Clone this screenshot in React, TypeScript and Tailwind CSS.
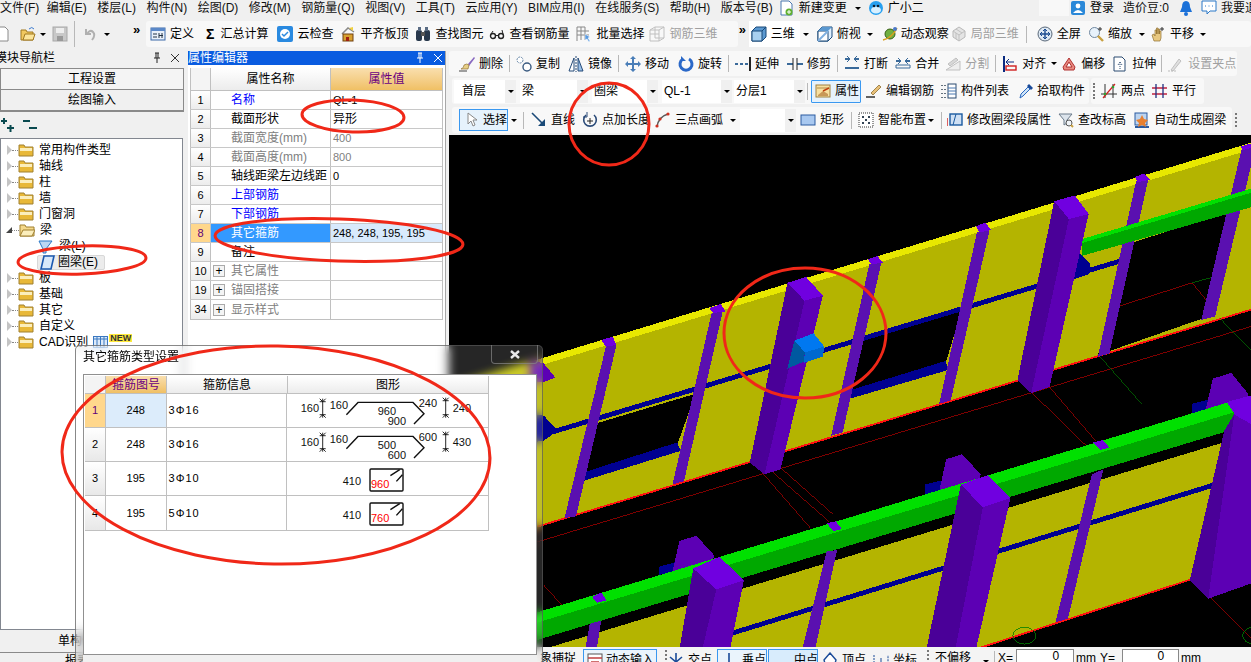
import { ReactNode } from "react";

function Ico({ children }: { children: ReactNode }) {
  return (
    <svg width="16" height="16" viewBox="0 0 16 16" className="shrink-0">
      {children}
    </svg>
  );
}

const icons: Record<string, ReactNode> = {
  page: <><path d="M-6 1h11l3 3v11H-6z" fill="#fff" stroke="#8a8a8a" /></>,
  open: <><path d="M1 4h5l1 2h6v8H1z" fill="#f0c860" stroke="#a07820" /><path d="M3 14l2-6h10l-2 6z" fill="#fbe49a" stroke="#a07820" /><path d="M9 3q3-3 5 0" fill="none" stroke="#3a7ad0" /></>,
  save: <><rect x="1" y="1" width="14" height="14" fill="#c8c8c8" stroke="#a8a8a8" /><rect x="4" y="2" width="8" height="5" fill="#eee" /><rect x="5" y="10" width="6" height="5" fill="#999" /></>,
  undo: <><path d="M4 3v5h5" fill="none" stroke="#b0b0b0" strokeWidth="2" /><path d="M5 8q3-5 6-2t-1 8" fill="none" stroke="#b0b0b0" strokeWidth="2" /></>,
  define: <><rect x="1" y="2" width="14" height="12" fill="#e8f0fa" stroke="#3a68a8" /><rect x="1" y="2" width="14" height="3" fill="#5a88c8" /><path d="M3 8h4M3 11h4M9 7v5M12 7v5M9 9.5h4" stroke="#234" /></>,
  cloud: <><rect x="0" y="0" width="16" height="16" rx="2" fill="#2a8ae0" /><circle cx="8" cy="8" r="5" fill="#fff" /><path d="M5 8l2 2 4-4" fill="none" stroke="#2a8ae0" strokeWidth="1.5" /></>,
  level: <><path d="M2 8l6-6 6 4" fill="none" stroke="#888" strokeWidth="1.5" /><rect x="3" y="8" width="10" height="7" fill="#d8a030" stroke="#704010" /><rect x="6" y="11" width="3" height="4" fill="#a02010" /><path d="M9 2l4-1v4" fill="#f0d040" /></>,
  find: <><rect x="1" y="4" width="6" height="11" rx="2" fill="#28384c" /><rect x="9" y="4" width="6" height="11" rx="2" fill="#28384c" /><rect x="6" y="6" width="4" height="4" fill="#555" /><rect x="3" y="1" width="3" height="4" fill="#5a6c84" /><rect x="10" y="1" width="3" height="4" fill="#5a6c84" /></>,
  glasses: <><circle cx="4" cy="10" r="2.5" fill="none" stroke="#222" strokeWidth="1.4" /><circle cx="12" cy="10" r="2.5" fill="none" stroke="#222" strokeWidth="1.4" /><path d="M6.5 9.5h3M2 8l2-3M14 8l-1-4" stroke="#222" /></>,
  batch: <><path d="M1 1v14M1 1h8M1 5h12M1 9h12M5 1v13M9 1v13" stroke="#888" fill="none" /><path d="M9 8l5 3-2 1 2 3-1 1-2-3-2 1z" fill="#5a9ae0" stroke="#fff" strokeWidth=".5" /></>,
  grid3d: <><path d="M1 4l5-3h9v11l-5 3H1z" fill="none" stroke="#c0c0c0" /><path d="M6 1v11M10 4v11M1 8h9M6 12h9M1 4h9l5-3" stroke="#c0c0c0" fill="none" /></>,
  cube: <><path d="M1 5l4-4h10v10l-4 4H1z" fill="#5a98d0" stroke="#184878" /><path d="M1 5h10v10H1z" fill="#a8d0f0" stroke="#184878" /><path d="M11 5l4-4" stroke="#184878" /></>,
  top: <><path d="M1 5l4-4h10v10l-4 4H1z" fill="#e0f0ff" stroke="#184878" /><path d="M1 5h10v10H1z" fill="#fff" stroke="#184878" /><path d="M1 15l10-10" stroke="#80b0e0" strokeWidth="2" /><path d="M5 1l-4 4h10l4-4z" fill="#5a98d0" /></>,
  orbit: <><circle cx="8" cy="8" r="5" fill="#70b040" stroke="#386018" /><path d="M1 14Q10 12 15 2" fill="none" stroke="#d8a020" strokeWidth="1.5" /><circle cx="13" cy="3" r="2" fill="#4a78c8" /></>,
  local: <><path d="M2 5l6-4 6 4v6l-6 4-6-4z" fill="#e4e4e4" stroke="#b8b8b8" /><path d="M2 5l6 4 6-4M8 9v6M5 3l6 4M5 13V7" stroke="#c0c0c0" fill="none" /></>,
  full: <><circle cx="8" cy="8" r="7" fill="#dce8f4" stroke="#5a6878" /><path d="M8 3v10M3 8h10" stroke="#1a4a90" strokeWidth="1.4" /><path d="M6 5l2-2 2 2M6 11l2 2 2-2M5 6L3 8l2 2M11 6l2 2-2 2" fill="none" stroke="#1a4a90" /></>,
  zoom: <><circle cx="6.5" cy="6.5" r="5" fill="#e8f2fb" stroke="#7088a0" /><path d="M10 10l5 5" stroke="#c8a040" strokeWidth="2.4" /><path d="M12 1v4M10 3h4" stroke="#333" /></>,
  pan: <><path d="M4 15L2 9l2-1 1 2V4h1.5v4V2H8v6V3h1.5v5V5H11v7l-1 3z" fill="#e8c880" stroke="#907030" strokeWidth=".7" /><path d="M12 1v4M10 3h4" stroke="#333" /></>,
  del: <><path d="M9 8l6-7 1 1-6 8z" fill="#8868c0" /><path d="M5 9q3-2 5 0l-1 4H2q3-1 3-4z" fill="#e8d088" stroke="#806020" strokeWidth=".6" /><path d="M0 15h8" stroke="#444" /></>,
  copy: <><circle cx="4" cy="4" r="3" fill="#fff" stroke="#6888a8" strokeDasharray="2 1" /><circle cx="11" cy="11" r="4" fill="#fff" stroke="#3a5a80" strokeWidth="1.4" /></>,
  mirror: <><path d="M1 15L6 2v13z" fill="#fff" stroke="#244a78" /><path d="M15 15L10 2v13z" fill="#9ac0e8" stroke="#244a78" /><path d="M8 0v16" stroke="#244a78" strokeDasharray="2 1" /></>,
  move: <><path d="M8 0l3 3H9v4h4V5l3 3-3 3V9H9v4h2l-3 3-3-3h2V9H3v2L0 8l3-3v2h4V3H5z" fill="#4a7eb8" /></>,
  rotate: <><path d="M11 3a6 6 0 1 1-6 0" fill="none" stroke="#2a68c8" strokeWidth="3" /><path d="M3 0v5h5z" fill="#2a68c8" /></>,
  extend: <><path d="M0 8h3M5 8h3M10 8h3" stroke="#3a6a9a" strokeWidth="2" /><path d="M15 1v14" stroke="#222" strokeWidth="2" /></>,
  trim: <><path d="M0 8h6M10 8h6" stroke="#3a6a9a" strokeWidth="2" /><path d="M6 2v12M10 2v12" stroke="#222" /></>,
  cut: <><path d="M1 3h5M10 3h5M1 12h14" stroke="#3a6a9a" strokeWidth="2" /><path d="M3 6l3-3-3-3M13 6l-3-3 3-3" fill="none" stroke="#3a6a9a" /></>,
  merge: <><path d="M1 5h5M10 5h5" stroke="#3a6a9a" strokeWidth="2" /><path d="M1 12h14v-3H1z" fill="none" stroke="#3a6a9a" /><path d="M3 2l3 3-3 3M13 2l-3 3 3 3" fill="none" stroke="#3a6a9a" /></>,
  split: <><path d="M1 14h14V5z" fill="#eee" stroke="#c0c0c0" /><path d="M3 8l8-6 2 2-8 6z" fill="#d8d8d8" stroke="#c0c0c0" /></>,
  align: <><path d="M2 0v16" stroke="#0a2a80" strokeWidth="2" /><rect x="4" y="10" width="10" height="4" fill="none" stroke="#d02020" strokeWidth="1.4" /><path d="M12 6H5M7 3L4 6l3 3" fill="none" stroke="#0a2a80" /></>,
  offset: <><path d="M8 2l6 9-1 3H3l-1-3z" fill="#e88a80" stroke="#b03030" /><path d="M8 6l3 5H5z" fill="#fff" stroke="#b03030" /></>,
  stretch: <><path d="M2 1h8l3 3v11H2z" fill="#fff" stroke="#2a4a70" /><path d="M8 6v7M6 9l2-3 2 3" fill="none" stroke="#2a4a70" strokeDasharray="1 1" /></>,
  grip: <><path d="M3 14l8-11 2 2-8 10z" fill="#e0e0e0" stroke="#c0c0c0" /><path d="M0 15h8" stroke="#bbb" strokeDasharray="2 1" /></>,
  props: <><rect x="1" y="2" width="14" height="12" fill="#f8e0a0" stroke="#a08040" /><path d="M2 5h12" stroke="#b08c48" /><path d="M3 12l5-4 5 3v2H3z" fill="#c89858" /><path d="M8 8l6-3" stroke="#c04010" strokeWidth="1.4" /></>,
  rebar: <><path d="M5 10l8-8 2 2-8 8z" fill="#e8c078" stroke="#806020" strokeWidth=".7" /><path d="M0 14h9" stroke="#222" strokeWidth="1.4" /></>,
  list: <><path d="M1 2v1M1 6v1M1 10v1M1 14v1M4 2v1M4 6v1M4 10v1M4 14v1" stroke="#345" strokeWidth="1.5" /><rect x="7" y="1" width="8" height="14" fill="#fff" stroke="#2a4a70" /><path d="M7 5h8M7 8h8M7 11h8" stroke="#4a78b0" /></>,
  pick: <><path d="M2 15l1-4 7-7 2 2-7 7z" fill="#cfe4f8" stroke="#2a68c0" /><path d="M9 3l2-2 4 4-2 2z" fill="#1a4a98" /></>,
  twopt: <><path d="M4 1v14M0 11h16M12 1v14" stroke="#333" /><path d="M2 15L14 1" stroke="#d02020" strokeWidth="1.2" /><circle cx="4" cy="11" r="1.3" fill="#30a030" /><circle cx="12" cy="4" r="1.3" fill="#30a030" /></>,
  para: <><path d="M0 5h15M0 11h15" stroke="#c02040" strokeWidth="1.3" /><path d="M4 1v14M11 1v14" stroke="#203080" strokeWidth="1.3" /></>,
  arrow: <><path d="M3 1v11l3-3 2 5 2-1-2-5h4z" fill="#fff" stroke="#888" /></>,
  line: <><path d="M1 1l12 12" stroke="#1a4a78" strokeWidth="1.6" /><path d="M14 7v7H7z" fill="#1a4a78" /></>,
  addlen: <><path d="M4 3a6.3 6.3 0 1 0 8 0" fill="none" stroke="#2a4a78" strokeWidth="1.6" /><path d="M5 0v5H1" fill="none" stroke="#2a4a78" /><path d="M8 6v6M5 9h6" stroke="#222" /></>,
  arc: <><path d="M2 15Q3 5 13 2" fill="none" stroke="#5a5a5a" strokeWidth="1.5" /><circle cx="2" cy="14" r="1.6" fill="#d03020" /><circle cx="5" cy="7" r="1.6" fill="#d03020" /><circle cx="13" cy="2" r="1.6" fill="#d03020" /></>,
  rect: <><rect x="1" y="3" width="14" height="10" fill="#a8c8f0" stroke="#2a5aa0" /></>,
  smart: <><rect x="1" y="1" width="14" height="14" fill="#fff" stroke="#333" strokeDasharray="1 1" /><path d="M4 4h2v2H4zM10 4h2v2h-2zM4 10h2v2H4zM10 10h2v2h-2zM7 7h2v2H7z" fill="#345" /></>,
  modify: <><rect x="3" y="2" width="12" height="11" fill="#cfe0f4" stroke="#1a5aa0" strokeWidth="1.4" /><path d="M0 6v8" stroke="#d02020" strokeWidth="1.4" /><path d="M6 13l3-11" stroke="#1a5aa0" /></>,
  elev: <><path d="M1 2h13l-5 6v3l-3 2V8z" fill="#dce4ec" stroke="#6a7a8a" /><circle cx="11" cy="11" r="3" fill="#f0f4f8" stroke="#555" /><path d="M13 13l2 2" stroke="#c8a040" strokeWidth="2" /></>,
  auto: <><rect x="1" y="1" width="12" height="12" fill="#bcd4f0" stroke="#2a5aa0" /><path d="M1 15h14" stroke="#2a5aa0" strokeWidth="2" /><path d="M8 3l2 4 4 1-3 3 1 4-4-2-4 2 1-4-3-3 4-1z" fill="#e88030" /></>,
  doc: <><path d="M2 1h8l3 3v11H2z" fill="#fff" stroke="#4a78b0" /><circle cx="10" cy="12" r="3.5" fill="#60b030" /><path d="M10 10v4M8 12h4" stroke="#fff" /></>,
  robot: <><circle cx="8" cy="8" r="7" fill="#28a0f0" /><ellipse cx="8" cy="10" rx="5" ry="3.6" fill="#d8f0ff" /><circle cx="6" cy="6" r="1.3" fill="#123" /><circle cx="10" cy="6" r="1.3" fill="#123" /></>,
  login: <><rect x="1" y="1" width="14" height="14" rx="2" fill="#2a88d8" /><circle cx="8" cy="6" r="2.4" fill="#fff" /><path d="M3 13q5-6 10 0z" fill="#fff" /></>,
  bell: <><path d="M8 1q4 0 4 6l2 5H2l2-5q0-6 4-6z" fill="#1a70d8" /><circle cx="8" cy="14" r="2" fill="#1a70d8" /></>,
  chat: <><path d="M1 1h14v10H9l-3 3v-3H1z" fill="#fff" stroke="#2a78c8" /><path d="M4 6h1M7.500 6h1M11 6h1" stroke="#2a78c8" /></>,
  cross: <><path d="M8 1v14M2 5l6 5 6-5" fill="none" stroke="#1a4a98" strokeWidth="1.6" /></>,
  perp: <><path d="M8 1v12M1 13h14" stroke="#1a4a98" strokeWidth="1.6" /></>,
  mid: <><path d="M1 13h14" stroke="#1a4a98" strokeWidth="1.6" /><rect x="6" y="11" width="4" height="4" fill="#1a4a98" /></>,
  vertex: <><path d="M8 1l6 7-2 7H4L2 8z" fill="#fff" stroke="#1a4a98" strokeWidth="1.4" /></>,
  coord: <><path d="M1 3v9l7 3 7-3V3" fill="none" stroke="#1a4a98" strokeDasharray="2 1" /><path d="M8 15V6" stroke="#1a4a98" /></>,
  input: <><rect x="1" y="2" width="14" height="13" fill="#fff" stroke="#555" /><path d="M1 6h14M4 10h8" stroke="#c04040" strokeWidth="1.4" /></>,
};

function Caret({ className = "" }: { className?: string }) {
  return <span className={`inline-block shrink-0 border-x-[3px] border-t-[3px] border-x-transparent border-t-black ${className}`} />;
}

function Sep({ className = "" }: { className?: string }) {
  return <span className={`inline-block shrink-0 w-px h-[17px] bg-[#b8b8b8] ${className}`} />;
}

function Grip() {
  return <span className="shrink-0 w-[2px] h-[16px] border-l-2 border-dotted border-[#777]" />;
}

function Tool({ icon, label, grey = false, className = "" }: { icon: string; label: string; grey?: boolean; className?: string }) {
  return (
    <div className={`flex items-center gap-1 shrink-0 ${grey ? "text-[#a0a0a0]" : "text-black"} ${className}`}>
      <Ico>{icons[icon]}</Ico>
      <span>{label}</span>
    </div>
  );
}

function Select({ label, className = "" }: { label: string; className?: string }) {
  return (
    <div className={`flex items-center justify-between h-[23px] bg-white pl-[2px] shrink-0 ${className}`}>
      <span>{label}</span>
      <span className="flex items-center justify-center w-[11px] h-full bg-[#f0f0f0]">
        <Caret />
      </span>
    </div>
  );
}

function TopMenu() {
  const items = ["编辑(E)", "楼层(L)", "构件(N)", "绘图(D)", "修改(M)", "钢筋量(Q)", "视图(V)", "工具(T)", "云应用(Y)", "BIM应用(I)", "在线服务(S)", "帮助(H)", "版本号(B)"];
  return (
    <div className="flex items-center h-[16px] bg-[#f0f0f0] text-[#111]">
      <span className="shrink-0 -mr-[3px]">文件(F)</span>
      <div className="flex items-center gap-[10.5px] ml-[10.5px] shrink-0">
        {items.map((m) => (
          <span key={m} className="shrink-0">{m}</span>
        ))}
      </div>
      <Tool icon="doc" label="新建变更" className="ml-[6px]" />
      <Caret className="ml-[8px]" />
      <Tool icon="robot" label="广小二" className="ml-[7px]" />
      <div className="ml-[115px] w-[30px] h-full bg-[#f8f8f8] shrink-0" />
      <Tool icon="login" label="登录" className="ml-[1px]" />
      <span className="ml-[9px] shrink-0">造价豆:0</span>
      <span className="ml-[9px]"><Ico>{icons.bell}</Ico></span>
      <span className="ml-[7px]"><Ico>{icons.chat}</Ico></span>
      <span className="ml-[4px] shrink-0">我要退出</span>
    </div>
  );
}

function MainToolbar() {
  return (
    <div className="flex items-center h-[35px] pt-[1px]">
      <div className="flex items-center h-[26px] w-[128px] shrink-0 overflow-hidden">
        <Ico>{icons.page}</Ico>
        <span className="ml-[4px]"><Ico>{icons.open}</Ico></span>
        <Caret className="ml-[4px]" />
        <span className="ml-[6px]"><Ico>{icons.save}</Ico></span>
        <Sep className="ml-[6px] h-[26px]" />
        <span className="ml-[7px]"><Ico>{icons.undo}</Ico></span>
        <Caret className="ml-[6px] border-t-[#aaa]" />
      </div>
      <span className="ml-[5px] w-[13px] text-[13px] font-bold leading-none -mt-[10px]">»</span>
      <div className="flex items-center gap-[7px] h-[26px] w-[594px] pl-[4px] bg-[#f8f8f8] rounded-[3px]">
        <Tool icon="define" label="定义" />
        <span className="flex items-center gap-[6px] ml-[5px] mr-[2px] shrink-0">
          <span className="font-bold text-[14px] leading-none">Σ</span>
          <span>汇总计算</span>
        </span>
        <Tool icon="cloud" label="云检查" />
        <Tool icon="level" label="平齐板顶" />
        <Tool icon="find" label="查找图元" />
        <Tool icon="glasses" label="查看钢筋量" className="-ml-[1px]" />
        <Tool icon="batch" label="批量选择" />
        <Tool icon="grid3d" label="钢筋三维" grey className="-ml-[2px]" />
      </div>
      <span className="ml-[1px] w-[10px] text-[13px] font-bold leading-none -mt-[10px]">»</span>
      <div className="flex items-center h-[26px] w-[504px] bg-[#f8f8f8] rounded-[3px]">
        <div className="flex items-center h-full pl-[2px] w-[51px] bg-white"><Tool icon="cube" label="三维" /></div>
        <Caret className="ml-[3px]" />
        <Tool icon="top" label="俯视" className="ml-[8px]" />
        <Caret className="ml-[6px]" />
        <Tool icon="orbit" label="动态观察" className="ml-[9px] [&>span]:-ml-[1px]" />
        <Tool icon="local" label="局部三维" grey className="ml-[2px]" />
        <Sep className="ml-[7px]" />
        <Tool icon="full" label="全屏" className="ml-[10px]" />
        <Tool icon="zoom" label="缩放" className="ml-[7px]" />
        <Caret className="ml-[7px]" />
        <Tool icon="pan" label="平移" className="ml-[5px]" />
        <Caret className="ml-[6px]" />
      </div>
    </div>
  );
}

function NavPanel() {
  const before = ["常用构件类型", "轴线", "柱", "墙", "门窗洞"];
  const after = ["板", "基础", "其它", "自定义", "CAD识别"];
  const Folder = ({ open = false }: { open?: boolean }) => (
    <svg width="16" height="14" viewBox="0 0 16 14" className="shrink-0">
      <path d="M1 2h5l1 2h8v9H1z" fill={open ? "#f4d88a" : "#e8b838"} stroke="#a08030" />
      {open ? <path d="M1 13l3-6h12l-3 6z" fill="#fbeebc" stroke="#a08030" /> : <path d="M2 5h12v3H2z" fill="#fbeebc" />}
    </svg>
  );
  const Branch = ({ label }: { label: string }) => (
    <div className="flex items-center h-4">
      <span className="ml-[6px] w-0 h-0 border-y-[5px] border-l-[5px] border-l-[#c4c4c4] border-y-transparent" />
      <span className="w-[6px] border-t border-dotted border-[#888]" />
      <Folder />
      <span className="ml-[5px]">{label}</span>
      {label === "CAD识别" && (
        <>
          <svg width="15" height="12" viewBox="0 0 15 12" className="ml-[5px]">
            <rect x=".5" y=".5" width="14" height="11" fill="#dceafa" stroke="#3a78c0" />
            <path d="M4 1v10M7.500 1v10M11 1v10M1 3h13" stroke="#3a78c0" />
          </svg>
          <span className="-mt-[8px] ml-[1px] px-[1px] h-[8px] leading-[8px] text-[9px] font-bold bg-[#ffe93c] text-[#333]">NEW</span>
        </>
      )}
    </div>
  );
  return (
    <div className="flex flex-col w-[186px] shrink-0 h-full overflow-hidden [&>*]:shrink-0">
      <div className="flex items-center h-[14px]">
        <span className="-ml-[5px]">模块导航栏</span>
        <svg width="10" height="12" viewBox="0 0 10 12" className="ml-[97px]"><path d="M3 1h4M4 1v5M6 1v5M2 6h6M5 6v5" stroke="#222" fill="none" /></svg>
        <svg width="10" height="10" viewBox="0 0 10 10" className="ml-[8px]"><path d="M1 1l8 8M9 1l-8 8" stroke="#333" /></svg>
      </div>
      <div className="mt-[3px] w-[184px] h-[22px] flex items-center justify-center border border-[#8a8a8a] bg-[#f4f4f4]">工程设置</div>
      <div className="w-[184px] h-[22px] flex items-center justify-center border-x border-b-2 border-[#8a8a8a] bg-[#f0f0f0]">绘图输入</div>
      <div className="flex items-center h-[26px] pl-[1px]">
        <svg width="42" height="16" viewBox="0 0 42 16">
          <path d="M0 4h6M3 1v6M6 11h7M9.500 8v7M22 4h7M28 11h8" stroke="#0a4a50" strokeWidth="2" />
        </svg>
      </div>
      <div className="w-[183px] h-[492px] border border-[#828790] bg-white pt-[3px] overflow-hidden">
        {before.map((b) => <Branch key={b} label={b} />)}
        <div className="flex items-center h-4">
          <span className="ml-[5px] w-0 h-0 border-b-[6px] border-l-[6px] border-b-[#444] border-l-transparent" />
          <span className="w-[7px] border-t border-dotted border-[#888]" />
          <Folder open />
          <span className="ml-[5px]">梁</span>
        </div>
        <div className="flex items-center h-4 pl-[37px]">
          <svg width="15" height="15" viewBox="0 0 15 15"><path d="M1 2h13l-6 8v4H5v-4z" fill="#bcd8f4" stroke="#2a78c8" /></svg>
          <span className="ml-[6px]">梁(L)</span>
        </div>
        <div className="flex items-center h-4 pl-[36px]">
          <div className="flex items-center h-[15px] w-[68px] pl-[2px] rounded-[2px] bg-[#ececec] border border-[#d8d8d8]">
            <svg width="15" height="15" viewBox="0 0 15 15"><path d="M4 1h10l-3 13H1z" fill="#d8e8fa" stroke="#1a58b0" strokeWidth="1.6" /></svg>
            <span className="ml-[3px]">圈梁(E)</span>
          </div>
        </div>
        {after.map((b) => <Branch key={b} label={b} />)}
      </div>
      <div className="w-[184px] h-[23px] flex items-center pl-[58px] border-b border-[#8a8a8a] bg-[#f0f0f0]">单构件输入</div>
      <div className="pl-[65px] pt-[2px]">报表预览</div>
    </div>
  );
}

function PropsPanel() {
  const rows: { n: string; name: string; value?: string; tone?: string; plus?: boolean; sel?: boolean }[] = [
    { n: "1", name: "名称", value: "QL-1", tone: "text-[#0000ff]" },
    { n: "2", name: "截面形状", value: "异形" },
    { n: "3", name: "截面宽度(mm)", value: "400", tone: "text-[#808080]" },
    { n: "4", name: "截面高度(mm)", value: "800", tone: "text-[#808080]" },
    { n: "5", name: "轴线距梁左边线距", value: "0" },
    { n: "6", name: "上部钢筋", tone: "text-[#0000ff]" },
    { n: "7", name: "下部钢筋", tone: "text-[#0000ff]" },
    { n: "8", name: "其它箍筋", value: "248, 248, 195, 195", sel: true },
    { n: "9", name: "备注" },
    { n: "10", name: "其它属性", tone: "text-[#808080]", plus: true },
    { n: "19", name: "锚固搭接", tone: "text-[#808080]", plus: true },
    { n: "34", name: "显示样式", tone: "text-[#808080]", plus: true },
  ];
  return (
    <div className="flex flex-col w-[258px] ml-[2px] shrink-0 h-full bg-white border-r border-[#a8a8a8]">
      <div className="flex items-center h-[14px] bg-[#0a5ce0] text-white">
        <span>属性编辑器</span>
        <svg width="10" height="12" viewBox="0 0 10 12" className="ml-[167px]"><path d="M3 1h4M4 1v5M6 1v5M2 6h6M5 6v5" stroke="#fff" fill="none" /></svg>
        <svg width="10" height="10" viewBox="0 0 10 10" className="ml-[8px]"><path d="M1 1l8 8M9 1l-8 8" stroke="#fff" /></svg>
      </div>
      <div className="mt-[3px] ml-[2px] w-[253px] border-r border-b border-[#c0c0c0]">
        <div className="flex h-[23px] border-b border-[#c0c0c0]">
          <div className="w-[21px] border-x border-[#c0c0c0] bg-[#f4f4f4]" />
          <div className="w-[120px] flex items-center justify-center border-r border-[#c0c0c0] bg-gradient-to-b from-white to-[#ececec]">属性名称</div>
          <div className="flex-1 flex items-center justify-center text-[#6a0080] bg-gradient-to-b from-[#f9dfae] to-[#f0c064]">属性值</div>
        </div>
        {rows.map((r) => (
          <div key={r.n} className="flex h-[19px] border-b border-[#c8c8c8] last:border-b-0">
            <div className={`w-[21px] flex items-center justify-center border-x border-[#c0c0c0] text-[11px] ${r.sel ? "bg-[#ffd78c] text-[#60007a]" : "bg-gradient-to-b from-white to-[#ececec]"}`}>{r.n}</div>
            <div className={`w-[120px] flex items-center border-r border-[#c0c0c0] ${r.sel ? "bg-[#3399ff] text-white" : r.tone ?? ""}`}>
              {r.plus ? (
                <span className="ml-[2px] mr-[6px] w-[12px] h-[12px] flex items-center justify-center border border-[#aaa] bg-[#f4f4f4] text-black leading-none">+</span>
              ) : (
                <span className="w-[20px] shrink-0" />
              )}
              <span className="whitespace-nowrap">{r.name}</span>
            </div>
            <div className={`flex-1 flex items-center pl-[2px] text-[11px] ${r.sel ? "bg-[#d8eafc]" : ""} ${r.value && r.tone === "text-[#808080]" ? "text-[#808080]" : ""} ${r.value === "异形" ? "text-[12px]" : ""}`}>{r.value}</div>
          </div>
        ))}
      </div>
    </div>
  );
}

function RightToolbars() {
  return (
    <div className="flex flex-col">
      <div className="flex items-center gap-[6px] h-[25px] pl-[10px] w-[788px] bg-[#f8f8f8] rounded-[3px]">
        <Tool icon="del" label="删除" />
        <Sep />
        <Tool icon="copy" label="复制" />
        <Tool icon="mirror" label="镜像" className="ml-[2px]" />
        <Sep />
        <Tool icon="move" label="移动" />
        <Tool icon="rotate" label="旋转" className="ml-[3px]" />
        <Sep />
        <Tool icon="extend" label="延伸" />
        <Tool icon="trim" label="修剪" className="ml-[2px]" />
        <Sep />
        <Tool icon="cut" label="打断" />
        <Tool icon="merge" label="合并" className="ml-[1px]" />
        <Tool icon="split" label="分割" grey />
        <Sep />
        <Tool icon="align" label="对齐" />
        <Caret className="-ml-[1px]" />
        <Tool icon="offset" label="偏移" className="-ml-[2px]" />
        <Tool icon="stretch" label="拉伸" className="ml-[1px]" />
        <Sep className="-ml-[1px]" />
        <Tool icon="grip" label="设置夹点" grey />
      </div>
      <div className="flex items-center h-[26px] mt-[2px] ml-[3px]">
        <div className="flex items-center h-full pl-[2px] w-[637px] bg-[#f8f8f8] rounded-[3px]">
          <Select label="首层" className="w-[62px] pl-[8px]" />
          <Select label="梁" className="w-[68px] ml-[4px]" />
          <Select label="圈梁" className="w-[66px] ml-[4px]" />
          <Select label="QL-1" className="w-[70px] ml-[4px]" />
          <Select label="分层1" className="w-[71px] ml-[2px]" />
          <Sep className="ml-[2px]" />
          <div className="flex items-center h-[23px] w-[50px] ml-[3px] pl-[3px] border border-[#3a98f0] bg-[#e6f2fc] rounded-[1px]">
            <Tool icon="props" label="属性" />
          </div>
          <Tool icon="rebar" label="编辑钢筋" className="ml-[5px]" />
          <Tool icon="list" label="构件列表" className="ml-[7px]" />
          <Tool icon="pick" label="拾取构件" className="ml-[9px] gap-[3px]" />
        </div>
        <div className="flex items-center h-full ml-[2px] pl-[2px] w-[113px] bg-[#f8f8f8] rounded-[3px] gap-[6px]">
          <Grip />
          <Tool icon="twopt" label="两点" />
          <Tool icon="para" label="平行" className="ml-[1px]" />
        </div>
      </div>
      <div className="flex items-center h-[26px] mt-[3px] ml-[3px] pl-[7px] w-[780px] bg-[#f8f8f8] rounded-[3px]">
        <div className="flex items-center h-[22px] w-[50px] pl-[5px] border border-[#3a98f0] bg-[#e6f2fc]">
          <Tool icon="arrow" label="选择" className="gap-[2px]" />
        </div>
        <Caret className="ml-[3px]" />
        <Sep className="ml-[6px]" />
        <Tool icon="line" label="直线" className="ml-[7px]" />
        <Tool icon="addlen" label="点加长度" className="ml-[7px]" />
        <Tool icon="arc" label="三点画弧" className="ml-[5px]" />
        <Caret className="ml-[7px]" />
        <Select label="" className="w-[56px] ml-[4px]" />
        <Tool icon="rect" label="矩形" className="ml-[4px]" />
        <Sep className="ml-[7px]" />
        <Tool icon="smart" label="智能布置" className="ml-[6px]" />
        <Caret className="ml-[2px]" />
        <Sep className="ml-[7px]" />
        <Tool icon="modify" label="修改圈梁段属性" className="ml-[5px]" />
        <Tool icon="elev" label="查改标高" className="ml-[7px]" />
        <Tool icon="auto" label="自动生成圈梁" className="ml-[8px]" />
        <span className="ml-[9px]"><Grip /></span>
      </div>
    </div>
  );
}

function BuildingView() {
  const yellow = "#b4b400";
  const purpleTop = "#7000e0";
  const purpleL = "#4a0098";
  const purpleR = "#5c00b4";
  const thin = "#5a10b0";
  const navy = "#000090";
  const bigCols = [
    ["560,440 600,422 637,478 597,493", "560,440 597,493 510,1010 478,975", "597,493 637,478 545,995 510,1010"],
    ["1140,197 1185,180 1215,235 1172,250", "1140,197 1172,250 1090,768 1060,730", "1172,250 1215,235 1130,750 1090,768"],
  ];
  const thinCols = [
    ["155,610 180,600 188,625 165,630", "165,630 188,625 100,1135 75,1140"],
    ["390,515 415,503 425,525 398,530", "395,530 420,520 335,1030 310,1040"],
    ["735,370 755,360 768,380 742,385", "738,385 765,375 680,885 655,895"],
    ["970,272 990,260 1003,283 978,290", "972,290 1000,280 915,790 890,800"],
    ["1315,125 1335,115 1348,133 1322,140", "1318,138 1345,130 1260,650 1235,660"],
    ["1545,35 1568,25 1578,35 1550,45", "1548,40 1578,35 1490,540 1460,550"],
  ];
  const frontThin = [
    ["135,1375 155,1362 167,1385 147,1392", "130,1455 155,1445 145,1530 120,1530"],
    ["645,1155 665,1150 678,1172 660,1180", "645,1240 668,1235 620,1530 592,1530"],
    ["1225,915 1245,908 1260,930 1240,938", "1222,1010 1247,995 1170,1440 1143,1450"],
  ];
  const frontBig = [
    ["355,1290 412,1255 465,1325 405,1353", "355,1290 405,1353 375,1530 325,1530", "405,1353 465,1325 435,1530 375,1530"],
    ["937,1040 995,1013 1045,1080 985,1108", "937,1040 985,1108 925,1530 862,1530", "985,1108 1045,1080 970,1530 925,1530"],
    ["1515,795 1568,775 1568,860 1535,835", "1510,880 1532,830 1475,1380 1435,1325", "1532,830 1568,855 1568,1335 1475,1380"],
  ];
  const stubs = [
    ["905,965 940,950 980,1010 975,1060 890,1060", "860,1040 895,1028 890,1060 860,1070"],
    ["325,1208 362,1193 400,1250 395,1300 310,1300", "280,1285 315,1272 310,1300 280,1310"],
    ["1485,725 1525,708 1562,770 1555,815 1470,815", "1440,800 1475,788 1470,825 1440,830"],
  ];
  const darkRed = ["-180,1292 1568,570", "505,1005 610,1170", "525,1000 650,1150", "545,990 660,1130", "1090,765 1210,925", "1130,750 1230,910", "1280,510 1440,440", "1440,440 1470,490", "30,1340 70,1400", "1480,1380 1568,1500"];
  return (
    <svg width="802" height="512" viewBox="0 0 802 512" className="block" shapeRendering="crispEdges">
      <rect width="802" height="512" fill="#000" />
      <g transform="translate(81 0) scale(0.4598 0.336)">
        <polygon points="-180,770 1568,43 1568,520 -180,1247" fill={yellow} />
        <polygon points="-180,750 1568,23 1568,43 -180,770" fill="#e8e800" />
        <polygon points="140,860 360,770 322,915 115,1005" fill="#000" />
        <polygon points="725,605 940,515 905,675 695,760" fill="#000" />
        <polygon points="1310,320 1530,225 1465,545 1235,655" fill="#000" />
        <polygon points="40,880 1290,365 1290,380 40,895" fill={navy} />
        <polygon points="115,1005 320,915 328,940 115,1030" fill={navy} />
        <polygon points="695,760 905,672 908,700 695,785" fill={navy} />
        <polygon points="0,830 30,835 60,880 30,910 0,915" fill={navy} />
        <polygon points="0,670 30,680 55,722 30,735 0,735" fill={purpleR} />
        {darkRed.map((p) => <polyline key={p} points={p} stroke="#a00000" strokeWidth="2" fill="none" />)}
        <polyline points="-180,1247 1568,520" stroke="#ff1010" strokeWidth="5" fill="none" />
        <polyline points="1240,660 1330,800" stroke="#006800" strokeWidth="2" fill="none" />
        <polyline points="1500,545 1568,640" stroke="#006800" strokeWidth="2" fill="none" />
        <polyline points="1440,440 1480,425" stroke="#006800" strokeWidth="2" fill="none" />
        <polygon points="1155,370 1195,350 1220,385 1180,400" fill={navy} />
        <polygon points="1155,370 1180,400 1180,430 1145,450" fill="#000070" />
        <polygon points="1180,400 1218,385 1215,415 1160,440" fill={navy} />
        {thinCols.map(([a, b]) => (
          <g key={a}>
            <polygon points={b} fill={thin} />
            <polygon points={a} fill={purpleTop} />
          </g>
        ))}
        <polygon points="1200,310 1568,160 1568,172 1200,322" fill="#00e000" />
        <polygon points="1200,322 1568,172 1568,215 1200,360" fill="#00a800" />
        {bigCols.map(([a, b, c]) => (
          <g key={a}>
            <polygon points={b} fill={purpleL} />
            <polygon points={c} fill={purpleR} />
            <polygon points={a} fill={purpleTop} />
          </g>
        ))}
        <polygon points="575,612 617,590 640,630 598,647" fill="#0078f0" />
        <polygon points="575,612 598,647 595,675 560,695" fill="#0058a0" />
        <polygon points="598,647 640,630 637,660 595,678" fill="#0068d0" />
        <polygon points="30,1530 1568,890 1568,1265 970,1530" fill={yellow} />
        <polygon points="440,1475 1485,1035 1485,1050 440,1490" fill={navy} />
        <polyline points="970,1530 1568,1265" stroke="#ff1010" strokeWidth="5" fill="none" />
        {stubs.map(([a, b]) => (
          <g key={a}>
            <polygon points={b} fill={navy} />
            <polygon points={a} fill={purpleR} />
          </g>
        ))}
        <polygon points="-180,1502 1520,795 1532,825 -180,1532" fill="#00e000" />
        <polygon points="-180,1532 1532,825 1532,875 -180,1584" fill="#00a800" />
        {frontThin.map(([a, b]) => (
          <g key={a}>
            <polygon points={b} fill={thin} />
            <polygon points={a} fill={purpleTop} />
          </g>
        ))}
        {frontBig.map(([a, b, c]) => (
          <g key={a}>
            <polygon points={b} fill={purpleL} />
            <polygon points={c} fill={purpleR} />
            <polygon points={a} fill={purpleTop} />
          </g>
        ))}
        <circle cx="1075" cy="1490" r="25" fill="none" stroke="#008000" strokeWidth="2" />
        <circle cx="1575" cy="1490" r="25" fill="none" stroke="#008000" strokeWidth="2" />
      </g>
    </svg>
  );
}

function BottomBar() {
  return (
    <div className="flex items-start h-[15px] overflow-hidden bg-[#f4f4f4] pt-[2px]">
      <span className="ml-[91px] w-[36px] shrink-0 mt-[3px] overflow-hidden">象捕捉</span>
      <div className="flex items-center gap-[3px] w-[74px] h-[22px] ml-[7px] pl-[3px] shrink-0 border border-[#3a98f0] bg-[#eaf4fc]">
        <Ico>{icons.input}</Ico>
        <span>动态输入</span>
      </div>
      <span className="mt-[2px] ml-[8px]"><Grip /></span>
      <Tool icon="cross" label="交点" className="ml-[1px] h-[22px]" />
      <div className="flex items-center gap-[5px] w-[50px] h-[22px] ml-[5px] pl-[3px] shrink-0 border border-[#3a98f0] bg-[#eaf4fc]">
        <Ico>{icons.perp}</Ico>
        <span>垂点</span>
      </div>
      <div className="flex items-center gap-[6px] w-[50px] h-[22px] ml-[1px] pl-[3px] shrink-0 border border-[#3a98f0] bg-[#d8ecfc]">
        <Ico>{icons.mid}</Ico>
        <span>中点</span>
      </div>
      <Tool icon="vertex" label="顶点" className="ml-[4px] h-[22px]" />
      <Tool icon="coord" label="坐标" className="ml-[7px] h-[22px]" />
      <span className="mt-[2px] ml-[10px]"><Grip /></span>
      <span className="ml-[6px] mt-[3px] shrink-0 w-[46px]">不偏移</span>
      <Caret className="mt-[11px] ml-[2px]" />
      <Sep className="ml-[5px] mt-[2px]" />
      <span className="ml-[3px] mt-[3px] shrink-0">X=</span>
      <div className="ml-[3px] w-[58px] h-[20px] shrink-0 border border-[#888] bg-white text-right pr-[14px]">0</div>
      <span className="ml-[2px] mt-[3px] shrink-0">mm</span>
      <span className="ml-[4px] mt-[3px] shrink-0">Y=</span>
      <div className="ml-[7px] w-[57px] h-[20px] shrink-0 border border-[#888] bg-white text-right pr-[14px]">0</div>
      <span className="ml-[2px] mt-[3px] shrink-0">mm</span>
    </div>
  );
}

function Dim({ x, top, bottom }: { x: number; top: number; bottom: number }) {
  return (
    <path
      d={`M${x} ${top}V${bottom}M${x - 3} ${top}l3 3l3 -3M${x - 3} ${top + 3}h6M${x - 3} ${bottom}l3 -3l3 3M${x - 3} ${bottom - 3}h6`}
      stroke="#111"
      fill="none"
      strokeWidth="0.9"
    />
  );
}

function BentBar({ a, b, c, d, e, f }: { a: string; b: string; c: string; d: string; e: string; f: string }) {
  return (
    <svg width="201" height="33" viewBox="0 0 201 33" className="block overflow-visible text-[11px]">
      <g fill="#111">
        <text x="13.7" y="17.7">{a}</text>
        <text x="42.7" y="14.7">{b}</text>
        <text x="90.7" y="21.4">{c}</text>
        <text x="100.7" y="31.4">{d}</text>
        <text x="131.7" y="12.7">{e}</text>
        <text x="165.7" y="17.7">{f}</text>
      </g>
      <Dim x={35.7} top={4.7} bottom={23.7} />
      <Dim x={158.7} top={3.7} bottom={23.7} />
      <polyline points="59.4,20.7 71,8.4 126,8.4 137,19.7 127,30" fill="none" stroke="#111" strokeWidth="1.4" />
    </svg>
  );
}

function Stirrup({ label }: { label: string }) {
  return (
    <svg width="201" height="33" viewBox="0 0 201 33" className="block text-[11px]">
      <text x="55.700" y="23" fill="#111">410</text>
      <rect x="83" y="7" width="33" height="22" rx="1" fill="none" stroke="#111" strokeWidth="1.4" />
      <path d="M103.400 13.700L112.700 7.700M109.400 19.400L115.400 12.700" stroke="#111" strokeWidth="1.4" />
      <text x="84" y="26" fill="#f00">{label}</text>
    </svg>
  );
}

function RebarDialog() {
  const rows = [
    { n: "1", no: "248", info: "3Φ16", shape: <BentBar a="160" b="160" c="960" d="900" e="240" f="240" /> },
    { n: "2", no: "248", info: "3Φ16", shape: <BentBar a="160" b="160" c="500" d="600" e="600" f="430" /> },
    { n: "3", no: "195", info: "3Φ10", shape: <Stirrup label="960" /> },
    { n: "4", no: "195", info: "5Φ10", shape: <Stirrup label="760" /> },
  ];
  return (
    <div className="absolute left-[75px] top-[345px] w-[468px] h-[330px] rounded-t-[5px] border border-[#555]/70 bg-white/15 backdrop-blur-[5px] pt-[28px] pl-[7px] pr-[5px]">
      <span className="absolute left-[7px] top-[5px] text-black">其它箍筋类型设置</span>
      <div className="absolute right-[4px] -top-px w-[47px] h-[19px] rounded-b-[4px] border border-t-0 border-[#888]/70 flex items-center justify-center">
        <svg width="10" height="9" viewBox="0 0 10 9"><path d="M1 1l8 7M9 1L1 8" stroke="#e8e8e8" strokeWidth="2.4" /></svg>
      </div>
      <div className="h-[281px] bg-white border border-[#909090] pt-[1px] pl-[1px]">
        <div className="w-[404px] border-r border-b border-[#c0c0c0]">
          <div className="flex h-[18px] border-b border-[#c0c0c0]">
            <div className="w-[21px] border-r border-[#c0c0c0] bg-[#f4f4f4]" />
            <div className="w-[61px] flex items-center justify-center border-r border-[#c0c0c0] text-[#6a0080] bg-gradient-to-b from-[#f9dfae] to-[#f0c064]">箍筋图号</div>
            <div className="w-[121px] flex items-center justify-center border-r border-[#c0c0c0] bg-gradient-to-b from-white to-[#ececec]">箍筋信息</div>
            <div className="flex-1 flex items-center justify-center bg-gradient-to-b from-white to-[#ececec]">图形</div>
          </div>
          {rows.map((r, i) => (
            <div key={r.n} className="flex h-[34px] border-b border-[#c0c0c0] last:border-b-0 text-[11px]">
              <div className={`w-[21px] flex items-center justify-center border-r border-[#c0c0c0] ${i === 0 ? "bg-[#ffd78c] text-[#60007a]" : "bg-gradient-to-b from-white to-[#e8e8e8]"}`}>{r.n}</div>
              <div className={`w-[61px] flex items-center justify-center border-r border-[#c0c0c0] ${i === 0 ? "bg-[#dcecfb]" : ""}`}>{r.no}</div>
              <div className="w-[121px] flex items-center pl-[2px] border-r border-[#c0c0c0] tracking-[1px]">{r.info}</div>
              <div className="flex-1">{r.shape}</div>
            </div>
          ))}
        </div>
      </div>
      <div className="h-[20px] bg-[#f0f0f0]" />
    </div>
  );
}

function Annotations() {
  return (
    <svg width="1251" height="662" viewBox="0 0 1251 662" className="absolute inset-0 pointer-events-none">
      <g fill="none" stroke="#f02818" strokeWidth="3">
        <ellipse cx="353" cy="116" rx="51" ry="16" transform="rotate(2 353 116)" />
        <ellipse cx="609" cy="124" rx="40" ry="41" />
        <ellipse cx="339" cy="240" rx="124" ry="21" transform="rotate(2 339 240)" />
        <ellipse cx="82" cy="260" rx="64" ry="14" transform="rotate(-2 82 260)" />
        <ellipse cx="805" cy="333" rx="81" ry="65" />
        <ellipse cx="276" cy="455" rx="214" ry="109" transform="rotate(1 276 455)" />
      </g>
    </svg>
  );
}

export default function App() {
  return (
    <div className="relative w-[1251px] h-[662px] overflow-hidden bg-[#f0f0f0] text-[12px] leading-none text-black whitespace-nowrap font-[family-name:'Liberation_Sans','Noto_Sans_CJK_SC',sans-serif]">
      <TopMenu />
      <MainToolbar />
      <div className="flex h-[611px]">
        <NavPanel />
        <PropsPanel />
        <div className="flex flex-col flex-1 min-w-0 ml-[3px]">
          <RightToolbars />
          <div className="mt-[2px] h-[512px] shrink-0">
            <BuildingView />
          </div>
          <BottomBar />
        </div>
      </div>
      <RebarDialog />
      <Annotations />
    </div>
  );
}
